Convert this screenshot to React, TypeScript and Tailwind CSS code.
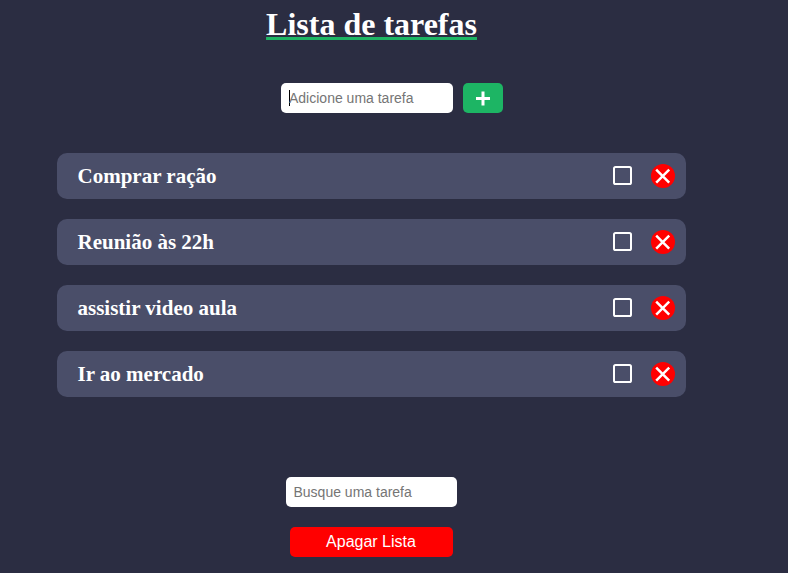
import React from "react";

const tasks: string[] = [
  "Comprar ração",
  "Reunião às 22h",
  "assistir video aula",
  "Ir ao mercado",
];

function TaskRow({ title }: { title: string }) {
  return (
    <li className="flex h-[46px] items-center rounded-[10px] bg-[#4a4e69] pr-[11px] pl-5">
      <span className="flex-1 pl-[0.5px] font-['Liberation_Serif',serif] text-[21px] leading-6 font-bold text-white">
        {title}
      </span>
      <button className="mr-[19px] mb-px size-[19px]" aria-label="Concluir">
        <svg viewBox="0 0 19 19" className="size-[19px] fill-none stroke-white stroke-2">
          <rect x="1" y="1" width="17" height="17" rx="1.6" />
        </svg>
      </button>
      <button className="mb-px size-6 rounded-full bg-[#ff0000]" aria-label="Remover">
        <svg viewBox="0 0 24 24" className="size-6 fill-none stroke-white stroke-[2.5]">
          <path d="M5.2 5.7 18.2 18.7M18.2 5.7 5.2 18.7" />
        </svg>
      </button>
    </li>
  );
}

export default function App() {
  return (
    <div className="h-[573px] w-full overflow-hidden bg-[#2b2d42]">
      <main className="flex w-[743px] flex-col items-center pt-[6px]">
        <h1 className="font-['Liberation_Serif',serif] text-[32px] leading-[37px] font-bold text-white underline decoration-[#1db564] decoration-[3px] [text-decoration-skip-ink:none]">
          Lista de tarefas
        </h1>
        <form className="mt-10 ml-[41px] flex gap-[10px]">
          <div className="flex h-[30px] w-[172px] items-center rounded-[5px] bg-white pl-2 font-['Liberation_Sans',sans-serif] text-[14px] text-[#757575]">
            <span className="-mr-px h-4 w-px bg-black" />
            Adicione uma tarefa
          </div>
          <button
            type="button"
            aria-label="Adicionar"
            className="flex h-[30px] w-10 items-center justify-center rounded-[5px] bg-[#1db564]"
          >
            <svg viewBox="0 0 20 20" className="size-5 fill-white">
              <path d="M8.5 3.5h3v5.6h5.5v2.8h-5.5v5.6h-3v-5.6H3V9.1h5.5z" />
            </svg>
          </button>
        </form>
        <ul className="mt-10 flex w-[629px] flex-col gap-5">
          {tasks.map((title) => (
            <TaskRow key={title} title={title} />
          ))}
        </ul>
        <input
          placeholder="Busque uma tarefa"
          className="mt-20 h-[30px] w-[171px] rounded-[5px] bg-white pl-[7.5px] font-['Liberation_Sans',sans-serif] text-[14px] placeholder:text-[#757575]"
        />
        <button className="mt-5 h-[30px] w-[163px] rounded-[5px] bg-[#ff0000] pr-px font-['Liberation_Sans',sans-serif] text-[16px] leading-[18px] text-white">
          Apagar Lista
        </button>
      </main>
    </div>
  );
}
